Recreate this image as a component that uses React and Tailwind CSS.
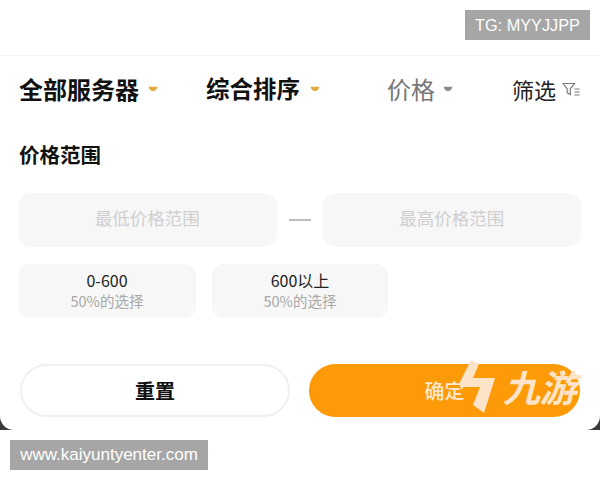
const cjk = "font-['Noto_Sans_CJK_SC','Noto_Sans',sans-serif]";

const Caret = ({ color, className }) => (
  <svg width="10" height="6" viewBox="0 0 10 6" className={className}>
    <path d="M0.5 0.8h9c-.6 2.6-2.400 4.400-4.500 4.400S1.100 3.400 .5 .8z" fill={color} />
  </svg>
);

const FilterIcon = () => (
  <svg width="18" height="15" viewBox="0 0 18 15" fill="none" stroke="#777" strokeWidth="1.100" className="ml-[6px]">
    <path d="M1 1.500h11.500L8.300 6.800v5.700L5.200 10.800V6.800z" />
    <path d="M12.500 7h5M12.500 10h5M12.500 13h5" />
  </svg>
);

const NavItem = ({ label, color, weight, caret, caretGap, size, className }) => (
  <div className={`flex items-center ${className}`}>
    <span className={`leading-none ${size} ${weight}`} style={{ color }}>{label}</span>
    <Caret color={caret} className={caretGap} />
  </div>
);

const PriceInput = ({ placeholder }) => (
  <div className="flex h-[54px] flex-1 items-center justify-center rounded-[14px] bg-[#f7f7f7] pb-[3px] text-[17.500px] text-[#cfcfcf]">
    {placeholder}
  </div>
);

const Chip = ({ title, className }) => (
  <div className={`flex h-[54px] flex-col items-center justify-center rounded-[12px] bg-[#f7f7f7] pb-[2px] ${className}`}>
    <span className="text-[16px] leading-[21px] text-[#222]">{title}</span>
    <span className="text-[14.500px] leading-[20px] text-[#a8a8a8]">50%的选择</span>
  </div>
);

export default function App() {
  return (
    <div className={`relative h-[480px] w-[600px] overflow-hidden bg-white ${cjk}`}>
      <div className="h-[430px] bg-[#3a3a3a]">
        <div className="h-full rounded-b-[14px] bg-white">
          <div className="h-[56px] border-b border-[#f3f3f3]" />

          <div className="flex h-[66px] items-center pl-[19px]">
            <NavItem label="全部服务器" color="#111" weight="font-bold" size="text-[24px]" caret="#e3a93c" caretGap="ml-[9px]" />
            <NavItem label="综合排序" color="#111" weight="font-bold" size="text-[23.500px]" caret="#e3a93c" caretGap="ml-[10px]" className="ml-[48px]" />
            <NavItem label="价格" color="#777" weight="font-normal" size="text-[24px]" caret="#8c8c8c" caretGap="ml-[8px]" className="ml-[67px]" />
            <div className="ml-[59px] flex items-center">
              <span className="text-[22px] leading-none text-[#222]">筛选</span>
              <FilterIcon />
            </div>
          </div>

          <h2 className="mt-[19px] pl-[19px] text-[20.500px] leading-[26px] font-bold text-[#111]">价格范围</h2>

          <div className="mt-[26px] flex items-center pr-[19px] pl-[18px]">
            <PriceInput placeholder="最低价格范围" />
            <div className="mx-[12px] h-[2px] w-[22px] bg-[#bdbdbd]" />
            <PriceInput placeholder="最高价格范围" />
          </div>

          <div className="mt-[17px] flex gap-[16px] pl-[18px]">
            <Chip title="0-600" className="w-[178px]" />
            <Chip title="600以上" className="w-[176px]" />
          </div>

          <div className="mt-[46px] flex gap-[19px] pr-[20px] pl-[20px]">
            <button className="flex h-[53px] w-[270px] items-center justify-center rounded-full border-2 border-[#f0f0f0] bg-white text-[20px] font-bold text-[#111]">
              重置
            </button>
            <button className="flex h-[53px] w-[271px] items-center justify-center rounded-full bg-[#fd9a07] text-[20px] font-medium text-[#fde8d0]">
              确定
            </button>
          </div>
        </div>
      </div>

      {/* 九游 logo sits over the confirm button */}
      <div className="absolute top-[358px] left-[460px] flex items-center">
        <svg width="36" height="56" viewBox="0 0 36 56" fill="#fde4c8">
          <path d="M11 2l8 4-6 14h22L24 55l-11-8 7-18H0v-5z" />
        </svg>
        <span className="ml-[7px] text-[37px] leading-none font-bold tracking-[-0.500px] text-[#fde4c8] italic">九游</span>
      </div>

      <div className="absolute top-[10px] left-[465px] flex h-[30px] w-[125px] items-center justify-center bg-[#a6a6a6] font-['Liberation_Sans',sans-serif] text-[16.300px] text-white">
        TG: MYYJJPP
      </div>
      <div className="absolute top-[440px] left-[10px] flex h-[30px] w-[198px] items-center justify-center bg-[#a6a6a6] font-['Liberation_Sans',sans-serif] text-[17px] text-white">
        www.kaiyuntyenter.com
      </div>
    </div>
  );
}
